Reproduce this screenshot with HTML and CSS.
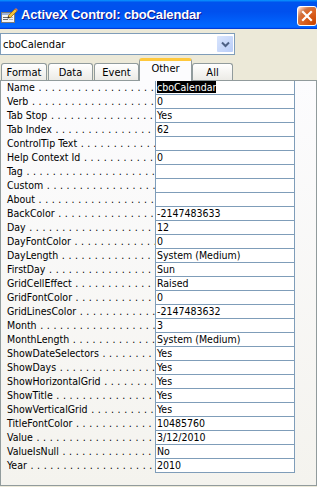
FILE: index.html
```html
<!DOCTYPE html>
<html lang="en">
<head>
    <meta charset="UTF-8">
    <title>ActiveX Control: cboCalendar</title>
    <link rel="stylesheet" href="styles.css">
</head>
<body>
    <div class="window">
        <!-- Title bar -->
        <div class="titlebar">
            <svg class="title-icon" width="17" height="17" viewBox="0 0 17 17">
                <rect x="0.5" y="5.5" width="13" height="10" fill="#f4f4f4" stroke="#7a7a7a"/>
                <rect x="1" y="6" width="12" height="2" fill="#9db3d8"/>
                <line x1="2" y1="10.5" x2="7" y2="10.5" stroke="#6a6a6a"/>
                <line x1="2" y1="12.5" x2="7" y2="12.5" stroke="#6a6a6a"/>
                <rect x="8" y="10" width="4" height="1" fill="#b0b0b0"/>
                <rect x="8" y="12" width="4" height="1" fill="#b0b0b0"/>
                <path d="M7 9 L14 2 L16 4 L9 11 Z" fill="#f3c33a" stroke="#9a6a10" stroke-width="0.8"/>
                <path d="M7 9 L6.5 11.5 L9 11 Z" fill="#333"/>
                <path d="M14 2 L15 1 L17 3 L16 4 Z" fill="#d7745b"/>
            </svg>
            <span class="title-text">ActiveX Control: cboCalendar</span>
            <div class="close-btn">
                <svg width="12" height="12" viewBox="0 0 12 12">
                    <path d="M2 2 L10 10 M10 2 L2 10" stroke="#fff" stroke-width="2.2" stroke-linecap="square"/>
                </svg>
            </div>
        </div>

        <!-- Object picker -->
        <div class="combo">
            <span class="combo-text">cboCalendar</span>
            <div class="combo-btn">
                <svg width="9" height="7" viewBox="0 0 9 7">
                    <path d="M1 1.5 L4.5 5 L8 1.5" fill="none" stroke="#4d6185" stroke-width="2"/>
                </svg>
            </div>
        </div>

        <!-- Tabs -->
        <div class="tabs">
            <div class="tab">Format</div>
            <div class="tab">Data</div>
            <div class="tab">Event</div>
            <div class="tab selected">Other</div>
            <div class="tab">All</div>
        </div>

        <!-- Property list -->
        <div class="panel">
            <div class="row"><span class="label">Name</span><span class="value"><span class="highlight">cboCalendar</span></span></div>
            <div class="row"><span class="label">Verb</span><span class="value">0</span></div>
            <div class="row"><span class="label">Tab Stop</span><span class="value">Yes</span></div>
            <div class="row"><span class="label">Tab Index</span><span class="value">62</span></div>
            <div class="row"><span class="label">ControlTip Text</span><span class="value"></span></div>
            <div class="row"><span class="label">Help Context Id</span><span class="value">0</span></div>
            <div class="row"><span class="label">Tag</span><span class="value"></span></div>
            <div class="row"><span class="label">Custom</span><span class="value"></span></div>
            <div class="row"><span class="label">About</span><span class="value"></span></div>
            <div class="row"><span class="label">BackColor</span><span class="value">-2147483633</span></div>
            <div class="row"><span class="label">Day</span><span class="value">12</span></div>
            <div class="row"><span class="label">DayFontColor</span><span class="value">0</span></div>
            <div class="row"><span class="label">DayLength</span><span class="value">System (Medium)</span></div>
            <div class="row"><span class="label">FirstDay</span><span class="value">Sun</span></div>
            <div class="row"><span class="label">GridCellEffect</span><span class="value">Raised</span></div>
            <div class="row"><span class="label">GridFontColor</span><span class="value">0</span></div>
            <div class="row"><span class="label">GridLinesColor</span><span class="value">-2147483632</span></div>
            <div class="row"><span class="label">Month</span><span class="value">3</span></div>
            <div class="row"><span class="label">MonthLength</span><span class="value">System (Medium)</span></div>
            <div class="row"><span class="label">ShowDateSelectors</span><span class="value">Yes</span></div>
            <div class="row"><span class="label">ShowDays</span><span class="value">Yes</span></div>
            <div class="row"><span class="label">ShowHorizontalGrid</span><span class="value">Yes</span></div>
            <div class="row"><span class="label">ShowTitle</span><span class="value">Yes</span></div>
            <div class="row"><span class="label">ShowVerticalGrid</span><span class="value">Yes</span></div>
            <div class="row"><span class="label">TitleFontColor</span><span class="value">10485760</span></div>
            <div class="row"><span class="label">Value</span><span class="value">3/12/2010</span></div>
            <div class="row"><span class="label">ValueIsNull</span><span class="value">No</span></div>
            <div class="row"><span class="label">Year</span><span class="value">2010</span></div>
        </div>
    </div>
</body>
</html>
```

FILE: styles.css
```css
body {
    margin: 0;
    padding: 0;
    background-color: #ece9d8;
    font-family: "DejaVu Sans Condensed", "DejaVu Sans", sans-serif;
    font-size: 10.5px;
    color: #000;
}

.window {
    width: 317px;
    height: 487px;
    overflow: hidden;
}

/* Title bar */
.titlebar {
    height: 29px;
    display: flex;
    align-items: center;
    background: linear-gradient(180deg, #0997ff, #0053ee 8%, #0050ee 40%, #0066ff 88%, #0066ff 93%, #005bff 95%, #003dd7 96%, #003dd7);
}

.title-icon {
    margin-left: 1px;
    margin-top: 1px;
}

.title-text {
    margin-left: 3px;
    flex: 1;
    font-family: "Liberation Sans", Arial, sans-serif;
    font-weight: bold;
    font-size: 13px;
    color: #fff;
    text-shadow: 1px 1px #0f1089;
    letter-spacing: -0.15px;
}

.close-btn {
    width: 20px;
    height: 20px;
    box-sizing: border-box;
    margin-top: 2px;
    border: 1px solid #fff;
    border-radius: 3px;
    background: radial-gradient(circle at 90% 90%, #cc4600 0, #dc6527 55%, #cd7546 70%, #ffccb2 90%, #fff 100%);
    display: flex;
    align-items: center;
    justify-content: center;
}

/* Combo box */
.combo {
    margin-top: 4px;
    width: 235px;
    height: 22px;
    box-sizing: border-box;
    border: 1px solid #7f9db9;
    background-color: #fff;
    display: flex;
    align-items: center;
}

.combo-text {
    flex: 1;
    padding-left: 2px;
    font-size: 11px;
}

.combo-btn {
    width: 16px;
    height: 16px;
    margin-right: 1px;
    border-radius: 1px;
    background: linear-gradient(135deg, #d9e5fd, #b9cdf8);
    display: flex;
    align-items: center;
    justify-content: center;
}

/* Tabs */
.tabs {
    margin-top: 3px;
    padding-left: 1px;
    display: grid;
    grid-template-columns: 46px 46px 46px 52px 42px;
    align-items: end;
    height: 22px;
    position: relative;
    z-index: 1;
}

.tab {
    height: 17px;
    box-sizing: border-box;
    border: 1px solid #919b9c;
    border-bottom: none;
    border-radius: 3px 3px 0 0;
    background: linear-gradient(#ffffff, #ecebe6);
    text-align: center;
    line-height: 17px;
    font-size: 11px;
}

.tab + .tab {
    margin-left: 1px;
}

.tab.selected {
    height: 23px;
    margin-bottom: -1px;
    margin-left: 0;
    margin-right: -1px;
    border-top: 3px solid #ffc83c;
    background: #fcfcfe;
    line-height: 16px;
}

/* Property panel */
.panel {
    height: 406px;
    box-sizing: border-box;
    border: 1px solid #919b9c;
    background: linear-gradient(#fcfcfe, #f4f3ee);
}

.row {
    display: grid;
    grid-template-columns: 154px 140px;
    height: 14px;
}

.label {
    padding-left: 6px;
    white-space: nowrap;
    overflow: hidden;
    line-height: 13px;
}

.label::after {
    content: " . . . . . . . . . . . . . . . . . . . . . . . . . . . . . . . . . . . .";
    word-spacing: 0.6px;
}

.value {
    box-sizing: border-box;
    height: 14px;
    padding-left: 1px;
    border-left: 1px solid #7f9db9;
    border-right: 1px solid #7f9db9;
    border-bottom: 1px solid #7f9db9;
    background-color: #fff;
    line-height: 13px;
    white-space: nowrap;
    overflow: hidden;
}

.highlight {
    background-color: #000;
    color: #fff;
}
```
